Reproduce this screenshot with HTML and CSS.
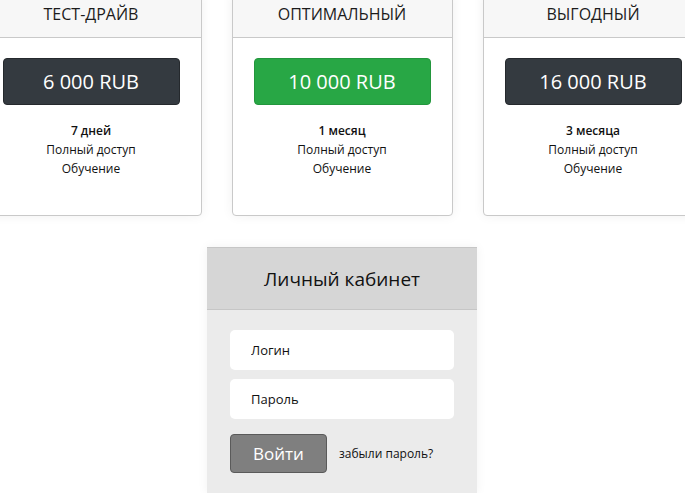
FILE: index.html
```html
<!DOCTYPE html>
<html lang="ru">
<head>
<meta charset="utf-8">
<title>Тарифы</title>
<link rel="stylesheet" href="styles.css">
</head>
<body>
<main class="page">
  <section class="plans">
    <div class="card">
      <div class="card-head">ТЕСТ-ДРАЙВ</div>
      <div class="card-body">
        <div class="price price-dark">6 000 RUB</div>
        <ul class="features">
          <li class="term">7 дней</li>
          <li>Полный доступ</li>
          <li>Обучение</li>
        </ul>
      </div>
    </div>
    <div class="card">
      <div class="card-head">ОПТИМАЛЬНЫЙ</div>
      <div class="card-body">
        <div class="price price-green">10 000 RUB</div>
        <ul class="features">
          <li class="term">1 месяц</li>
          <li>Полный доступ</li>
          <li>Обучение</li>
        </ul>
      </div>
    </div>
    <div class="card">
      <div class="card-head">ВЫГОДНЫЙ</div>
      <div class="card-body">
        <div class="price price-dark">16 000 RUB</div>
        <ul class="features">
          <li class="term">3 месяца</li>
          <li>Полный доступ</li>
          <li>Обучение</li>
        </ul>
      </div>
    </div>
  </section>

  <section class="login">
    <div class="login-head">Личный кабинет</div>
    <form class="login-body">
      <input class="field" type="text" placeholder="Логин">
      <input class="field" type="password" placeholder="Пароль">
      <div class="actions">
        <button class="submit" type="button">Войти</button>
        <a class="forgot" href="#">забыли пароль?</a>
      </div>
    </form>
  </section>
</main>
</body>
</html>
```

FILE: styles.css
```css
* { box-sizing: border-box; }

html, body {
  margin: 0;
  padding: 0;
  background: #fff;
  overflow: hidden;
}

body {
  font-family: "Open Sans", "Noto Sans", sans-serif;
  color: #212529;
}

.page {
  display: flex;
  flex-direction: column;
  align-items: center;
  margin-top: -11px;
  padding-right: 1px;
}

.plans {
  display: flex;
  justify-content: center;
  gap: 30px;
  width: 100%;
}

.card {
  flex: 0 0 221px;
  border: 1px solid #c9c9c9;
  border-radius: 4px;
  background: #fff;
  box-shadow: 0 0 12px rgba(0, 0, 0, 0.06);
  overflow: hidden;
}

.card-head {
  background: #f7f7f7;
  border-bottom: 1px solid #c9c9c9;
  text-align: center;
  font-size: 16px;
  line-height: 27px;
  padding: 11px 0 9px;
  color: #1c1c1c;
}

.card-body {
  padding: 20px 21px 37px;
  text-align: center;
}

.price {
  height: 47px;
  border-radius: 4px;
  color: #fff;
  font-size: 20px;
  line-height: 45px;
  border: 1px solid transparent;
}

.price-dark {
  background: #343a40;
  border-color: #25292d;
}

.price-green {
  background: #28a745;
  border-color: #23963d;
}

.features {
  list-style: none;
  margin: 16px 0 0;
  padding: 0;
  font-size: 12px;
  line-height: 19px;
  color: #111;
}

.features .term {
  font-weight: 600;
}

.login {
  width: 270px;
  margin-top: 31px;
  background: #ebebeb;
  box-shadow: 0 0 10px rgba(0, 0, 0, 0.06);
  border-top: 1px solid #c6c6c6;
}

.login-head {
  background: #d6d6d6;
  border-bottom: 1px solid #c6c6c6;
  height: 62px;
  display: flex;
  align-items: center;
  justify-content: center;
  font-size: 19px;
  color: #111;
}

.login-body {
  display: flex;
  flex-direction: column;
  gap: 9px;
  padding: 20px 23px 20px;
  margin: 0;
}

.field {
  height: 40px;
  border: none;
  border-radius: 5px;
  background: #fff;
  padding: 0 21px;
  font-family: inherit;
  font-size: 13px;
  color: #111;
  outline: none;
}

.field::placeholder {
  color: #111;
  opacity: 1;
}

.actions {
  display: flex;
  align-items: center;
  gap: 12px;
  margin-top: 6px;
}

.submit {
  width: 97px;
  height: 39px;
  background: #7f7f7f;
  border: 1px solid #5a5a5a;
  border-radius: 4px;
  color: #fff;
  font-family: inherit;
  font-size: 17px;
  padding: 0;
  cursor: pointer;
}

.forgot {
  font-size: 12px;
  color: #111;
  text-decoration: none;
}
```
